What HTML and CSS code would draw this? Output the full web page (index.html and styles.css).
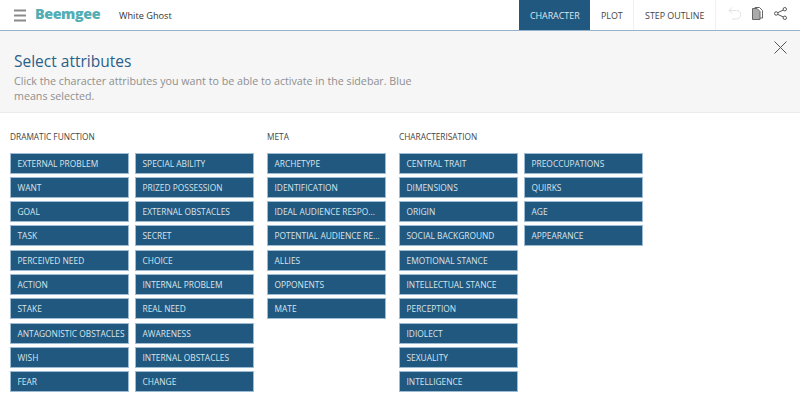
FILE: index.html
```html
<!DOCTYPE html>
<html lang="en">

<head>
    <meta charset="UTF-8">
    <title>Beemgee</title>
    <link rel="stylesheet" href="styles.css">
</head>

<body>
    <header class="topbar">
        <svg class="menu-icon" width="14" height="14" viewBox="0 0 14 14">
            <path d="M1 2.500h12M1 7.500h12M1 12.500h12" stroke="#8a8a8a" stroke-width="2" fill="none" />
        </svg>
        <span class="logo">Beemgee</span>
        <span class="story-title">White Ghost</span>
        <nav class="tabs">
            <a class="tab active">CHARACTER</a>
            <a class="tab">PLOT</a>
            <a class="tab">STEP OUTLINE</a>
        </nav>
        <div class="tools">
            <svg width="13" height="13" viewBox="0 0 13 13" fill="none" stroke="#e2e2e2" stroke-width="1">
                <path d="M4 .5 1 3.500l3 3M1 3.500h7.500a4 4 0 0 1 0 8.500H4" />
            </svg>
            <svg width="11" height="13" viewBox="0 0 11 13" fill="none" stroke="#666" stroke-width="1">
                <path d="M3 1V.5h4.500l3 3V11H8" />
                <path d="M.5 1.500h4.500l3 3v8H.5z" fill="#aaa" />
            </svg>
            <svg width="13" height="13" viewBox="0 0 13 13" fill="none" stroke="#555" stroke-width="1">
                <circle cx="2.200" cy="6.500" r="1.700" />
                <circle cx="10.800" cy="2.200" r="1.700" />
                <circle cx="10.800" cy="10.800" r="1.700" />
                <path d="M3.700 5.700 9.300 3M3.700 7.300 9.300 10" />
            </svg>
        </div>
    </header>

    <section class="intro">
        <h1>Select attributes</h1>
        <p>Click the character attributes you want to be able to activate in the sidebar. Blue means selected.</p>
        <svg class="close" width="13" height="13" viewBox="0 0 13 13">
            <path d="M.5.500l12 12M12.500.500l-12 12" stroke="#555" stroke-width="1" fill="none" />
        </svg>
    </section>

    <main class="groups">
        <div class="group">
            <h2>DRAMATIC FUNCTION</h2>
            <div class="attrs">
                <button>EXTERNAL PROBLEM</button>
                <button>WANT</button>
                <button>GOAL</button>
                <button>TASK</button>
                <button>PERCEIVED NEED</button>
                <button>ACTION</button>
                <button>STAKE</button>
                <button>ANTAGONISTIC OBSTACLES</button>
                <button>WISH</button>
                <button>FEAR</button>
                <button>SPECIAL ABILITY</button>
                <button>PRIZED POSSESSION</button>
                <button>EXTERNAL OBSTACLES</button>
                <button>SECRET</button>
                <button>CHOICE</button>
                <button>INTERNAL PROBLEM</button>
                <button>REAL NEED</button>
                <button>AWARENESS</button>
                <button>INTERNAL OBSTACLES</button>
                <button>CHANGE</button>
            </div>
        </div>
        <div class="group">
            <h2>META</h2>
            <div class="attrs">
                <button>ARCHETYPE</button>
                <button>IDENTIFICATION</button>
                <button>IDEAL AUDIENCE RESPO...</button>
                <button>POTENTIAL AUDIENCE RE...</button>
                <button>ALLIES</button>
                <button>OPPONENTS</button>
                <button>MATE</button>
            </div>
        </div>
        <div class="group">
            <h2>CHARACTERISATION</h2>
            <div class="attrs">
                <button>CENTRAL TRAIT</button>
                <button>DIMENSIONS</button>
                <button>ORIGIN</button>
                <button>SOCIAL BACKGROUND</button>
                <button>EMOTIONAL STANCE</button>
                <button>INTELLECTUAL STANCE</button>
                <button>PERCEPTION</button>
                <button>IDIOLECT</button>
                <button>SEXUALITY</button>
                <button>INTELLIGENCE</button>
                <button>PREOCCUPATIONS</button>
                <button>QUIRKS</button>
                <button>AGE</button>
                <button>APPEARANCE</button>
            </div>
        </div>
    </main>
</body>

</html>
```

FILE: styles.css
```css
body {
    font-family: "Open Sans", sans-serif;
    margin: 0;
    height: 411px;
    overflow: hidden;
    background-color: white;
}

.topbar {
    display: flex;
    align-items: center;
    height: 30px;
    border-bottom: 1px solid #94b2cc;
    background-color: white;
}

.menu-icon {
    margin-left: 13px;
    flex: 0 0 auto;
}

.logo {
    font-weight: 800;
    font-size: 14.300px;
    letter-spacing: -0.4px;
    color: #52adb5;
    margin-left: 8px;
    margin-bottom: 3px;
    width: 84px;
}

.story-title {
    font-size: 9.200px;
    color: #333;
}

.tabs {
    display: flex;
    margin-left: auto;
    height: 100%;
}

.tab {
    display: flex;
    align-items: center;
    padding: 0 10.670px;
    font-size: 8.900px;
    color: #444;
    border-right: 1px solid #f0f0f0;
}

.tab.active {
    background-color: #20587f;
    color: #dfe8ef;
    border-right: none;
}

.tools {
    display: flex;
    align-items: center;
    gap: 11px;
    padding: 0 13px 3px 12px;
}

.intro {
    position: relative;
    height: 82px;
    padding: 21px 14px 0;
    box-sizing: border-box;
    background-color: #f6f6f6;
    border-bottom: 1px solid #ebebeb;
}

.intro h1 {
    margin: 0;
    font-size: 15.500px;
    font-weight: 400;
    line-height: 19px;
    color: #2a5f88;
}

.intro p {
    margin: 3px 0 0;
    width: 410px;
    font-size: 10.700px;
    line-height: 15px;
    color: #8f8f8f;
}

.close {
    position: absolute;
    top: 10px;
    right: 13px;
}

.groups {
    display: flex;
    gap: 13.500px;
    padding: 0 10px;
}

.group h2 {
    margin: 18px 0 0;
    font-size: 8.300px;
    font-weight: 400;
    line-height: 12px;
    color: #444;
}

.attrs {
    display: grid;
    grid-template-rows: repeat(10, 21px);
    grid-auto-flow: column;
    grid-auto-columns: 118.500px;
    column-gap: 6.500px;
    row-gap: 3.330px;
    margin-top: 9.500px;
}

.attrs button {
    font-family: inherit;
    font-size: 8.400px;
    text-align: left;
    color: #d9e4ec;
    background-color: #20587f;
    border: 1px solid #9dbbd3;
    padding: 0 0 0 6.500px;
    margin: 0;
    white-space: nowrap;
}
```
